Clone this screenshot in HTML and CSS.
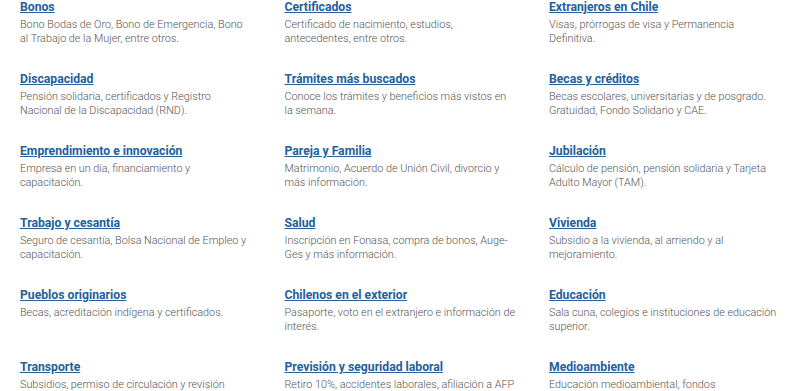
FILE: index.html
```html
<!DOCTYPE html>
<html lang="es">
<head>
    <meta charset="UTF-8">
    <meta name="viewport" content="width=device-width, initial-scale=1.0">
    <title>Temas</title>
    <link rel="stylesheet" href="styles.css">
</head>
<body>
    <div class="topics">
        <div class="topic">
            <a href="#" class="topic-title">Bonos</a>
            <p>Bono Bodas de Oro, Bono de Emergencia, Bono al Trabajo de la Mujer, entre otros.</p>
        </div>
        <div class="topic">
            <a href="#" class="topic-title">Certificados</a>
            <p>Certificado de nacimiento, estudios, antecedentes, entre otros.</p>
        </div>
        <div class="topic">
            <a href="#" class="topic-title">Extranjeros en Chile</a>
            <p>Visas, prórrogas de visa y Permanencia Definitiva.</p>
        </div>
        <div class="topic">
            <a href="#" class="topic-title">Discapacidad</a>
            <p>Pensión solidaria, certificados y Registro Nacional de la Discapacidad (RND).</p>
        </div>
        <div class="topic">
            <a href="#" class="topic-title">Trámites más buscados</a>
            <p>Conoce los trámites y beneficios más vistos en la semana.</p>
        </div>
        <div class="topic">
            <a href="#" class="topic-title">Becas y créditos</a>
            <p>Becas escolares, universitarias y de posgrado. Gratuidad, Fondo Solidario y CAE.</p>
        </div>
        <div class="topic">
            <a href="#" class="topic-title">Emprendimiento e innovación</a>
            <p>Empresa en un día, financiamiento y capacitación.</p>
        </div>
        <div class="topic">
            <a href="#" class="topic-title">Pareja y Familia</a>
            <p>Matrimonio, Acuerdo de Unión Civil, divorcio y más información.</p>
        </div>
        <div class="topic">
            <a href="#" class="topic-title">Jubilación</a>
            <p>Cálculo de pensión, pensión solidaria y Tarjeta Adulto Mayor (TAM).</p>
        </div>
        <div class="topic">
            <a href="#" class="topic-title">Trabajo y cesantía</a>
            <p>Seguro de cesantía, Bolsa Nacional de Empleo y capacitación.</p>
        </div>
        <div class="topic">
            <a href="#" class="topic-title">Salud</a>
            <p>Inscripción en Fonasa, compra de bonos, Auge-Ges y más información.</p>
        </div>
        <div class="topic">
            <a href="#" class="topic-title">Vivienda</a>
            <p>Subsidio a la vivienda, al arriendo y al mejoramiento.</p>
        </div>
        <div class="topic">
            <a href="#" class="topic-title">Pueblos originarios</a>
            <p>Becas, acreditación indígena y certificados.</p>
        </div>
        <div class="topic">
            <a href="#" class="topic-title">Chilenos en el exterior</a>
            <p>Pasaporte, voto en el extranjero e información de interés.</p>
        </div>
        <div class="topic">
            <a href="#" class="topic-title">Educación</a>
            <p>Sala cuna, colegios e instituciones de educación superior.</p>
        </div>
        <div class="topic">
            <a href="#" class="topic-title">Transporte</a>
            <p>Subsidios, permiso de circulación y revisión técnica.</p>
        </div>
        <div class="topic">
            <a href="#" class="topic-title">Previsión y seguridad laboral</a>
            <p>Retiro 10%, accidentes laborales, afiliación a AFP y más información.</p>
        </div>
        <div class="topic">
            <a href="#" class="topic-title">Medioambiente</a>
            <p>Educación medioambiental, fondos concursables y denuncias.</p>
        </div>
    </div>
</body>
</html>
```

FILE: styles.css
```css
body {
    font-family: Roboto, 'Liberation Sans', Arial, sans-serif;
    background-color: #ffffff;
    color: #5a5a5a;
    margin: 0;
    padding: 0;
}
.topics {
    display: grid;
    grid-template-columns: repeat(3, 232px);
    column-gap: 32.5px;
    row-gap: 25px;
    padding: 0 20px;
    margin-top: -1px;
}
.topic-title {
    display: block;
    font-size: 12.2px;
    line-height: 16px;
    font-weight: bold;
    color: #23609c;
    text-decoration: underline;
    margin-bottom: 3px;
}
.topic p {
    margin: 0;
    font-size: 10.8px;
    line-height: 14px;
    font-weight: 300;
    color: #555555;
}
```
